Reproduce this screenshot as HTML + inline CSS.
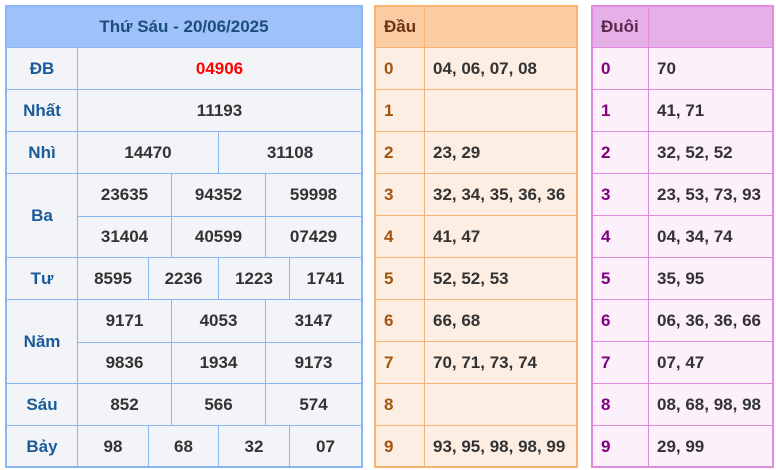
<!DOCTYPE html><html><head><meta charset="utf-8"><style>
*{box-sizing:border-box;margin:0;padding:0}
body{width:776px;height:470px;background:#fff;font-family:"Liberation Sans",sans-serif;font-weight:bold;font-size:17px;position:relative;overflow:hidden}
.t{position:absolute;top:5px;height:463px}
.row{display:flex;height:42px}
.c{display:flex;align-items:center;justify-content:center;color:#333}
#L{left:5px;width:358px;border:2px solid #8ab6f6;background:#f3f4f8}
#L .h{height:41px;background:#9fc2fa;color:#1c4d7c;font-size:17px;display:flex;align-items:center;justify-content:center;border-bottom:1px solid #8ab6f6}
#L .row{border-bottom:1px solid #8ab6f6}
#L .lab{width:71px;border-right:1px solid #8ab6f6;color:#1a5b97;font-size:17px}
#L .v{flex:1;display:flex;flex-direction:column}
#L .v .row{border-bottom:none}
#L .v .row+.row{border-top:1px solid #8ab6f6}
#L .c.n{border-right:1px solid #8ab6f6}
#L .c.n:last-child{border-right:none}
.R{border:2px solid;}
.R .row{border-bottom:1px solid}
.R .row:last-child{border-bottom:none}
.R .k{justify-content:flex-start;padding-left:8px;border-right:1px solid}
.R .val{justify-content:flex-start;padding-left:8px;flex:1}
#D{left:374px;width:204px;border-color:#f8b274;background:#fdeee3}
#D .row,#D .k{border-color:#f8b274}
#D .k{width:49px;color:#a0560f}
#D .hd{background:#fbcca2;height:41px}#D .hd .k{color:#6b3412}
#U{left:591px;width:183px;border-color:#e08ae0;background:#fcf0fa}
#U .row,#U .k{border-color:#e08ae0}
#U .k{width:56px;color:#800080}
#U .hd{background:#e5afe8;height:41px}#U .hd .k{color:#5a2a4a}
</style></head><body>
<div class="t" id="L">
<div class="h">Thứ Sáu - 20/06/2025</div>
<div class="row"><div class="c lab">ĐB</div><div class="c" style="flex:1;color:#f00;font-size:17px">04906</div></div>
<div class="row"><div class="c lab">Nhất</div><div class="c" style="flex:1">11193</div></div>
<div class="row"><div class="c lab">Nhì</div><div class="c n" style="width:141px">14470</div><div class="c n" style="flex:1">31108</div></div>
<div class="row" style="height:84px"><div class="c lab">Ba</div><div class="v">
<div class="row" style="height:42px"><div class="c n" style="width:94px">23635</div><div class="c n" style="width:94px">94352</div><div class="c n" style="flex:1">59998</div></div>
<div class="row" style="height:41px"><div class="c n" style="width:94px">31404</div><div class="c n" style="width:94px">40599</div><div class="c n" style="flex:1">07429</div></div></div></div>
<div class="row"><div class="c lab">Tư</div><div class="c n" style="width:71px">8595</div><div class="c n" style="width:70px">2236</div><div class="c n" style="width:71px">1223</div><div class="c n" style="flex:1">1741</div></div>
<div class="row" style="height:84px"><div class="c lab">Năm</div><div class="v">
<div class="row" style="height:42px"><div class="c n" style="width:94px">9171</div><div class="c n" style="width:94px">4053</div><div class="c n" style="flex:1">3147</div></div>
<div class="row" style="height:41px"><div class="c n" style="width:94px">9836</div><div class="c n" style="width:94px">1934</div><div class="c n" style="flex:1">9173</div></div></div></div>
<div class="row"><div class="c lab">Sáu</div><div class="c n" style="width:94px">852</div><div class="c n" style="width:94px">566</div><div class="c n" style="flex:1">574</div></div>
<div class="row" style="border-bottom:none"><div class="c lab">Bảy</div><div class="c n" style="width:71px">98</div><div class="c n" style="width:70px">68</div><div class="c n" style="width:71px">32</div><div class="c n" style="flex:1">07</div></div>
</div>
<div class="t R" id="D">
<div class="row hd"><div class="c k">Đầu</div><div class="c val"></div></div>
<div class="row"><div class="c k">0</div><div class="c val">04, 06, 07, 08</div></div>
<div class="row"><div class="c k">1</div><div class="c val"></div></div>
<div class="row"><div class="c k">2</div><div class="c val">23, 29</div></div>
<div class="row"><div class="c k">3</div><div class="c val">32, 34, 35, 36, 36</div></div>
<div class="row"><div class="c k">4</div><div class="c val">41, 47</div></div>
<div class="row"><div class="c k">5</div><div class="c val">52, 52, 53</div></div>
<div class="row"><div class="c k">6</div><div class="c val">66, 68</div></div>
<div class="row"><div class="c k">7</div><div class="c val">70, 71, 73, 74</div></div>
<div class="row"><div class="c k">8</div><div class="c val"></div></div>
<div class="row"><div class="c k">9</div><div class="c val">93, 95, 98, 98, 99</div></div>
</div>
<div class="t R" id="U">
<div class="row hd"><div class="c k">Đuôi</div><div class="c val"></div></div>
<div class="row"><div class="c k">0</div><div class="c val">70</div></div>
<div class="row"><div class="c k">1</div><div class="c val">41, 71</div></div>
<div class="row"><div class="c k">2</div><div class="c val">32, 52, 52</div></div>
<div class="row"><div class="c k">3</div><div class="c val">23, 53, 73, 93</div></div>
<div class="row"><div class="c k">4</div><div class="c val">04, 34, 74</div></div>
<div class="row"><div class="c k">5</div><div class="c val">35, 95</div></div>
<div class="row"><div class="c k">6</div><div class="c val">06, 36, 36, 66</div></div>
<div class="row"><div class="c k">7</div><div class="c val">07, 47</div></div>
<div class="row"><div class="c k">8</div><div class="c val">08, 68, 98, 98</div></div>
<div class="row"><div class="c k">9</div><div class="c val">29, 99</div></div>
</div>
</body></html>
